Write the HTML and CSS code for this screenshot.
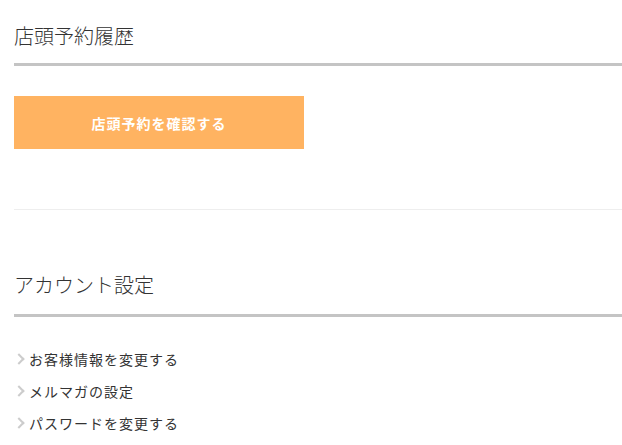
FILE: index.html
```html
<!DOCTYPE html>
<html lang="ja">
<head>
    <meta charset="UTF-8">
    <title>マイページ</title>
    <link rel="stylesheet" href="styles.css">
</head>
<body>
    <div class="page">
        <div class="section">
            <h2 class="title">店頭予約履歴</h2>
            <a class="btn" href="#">店頭予約を確認する</a>
        </div>
        <div class="section section2">
            <h2 class="title">アカウント設定</h2>
            <ul class="links">
                <li><a href="#"><span class="arrow"></span>お客様情報を変更する</a></li>
                <li><a href="#"><span class="arrow"></span>メルマガの設定</a></li>
                <li><a href="#"><span class="arrow"></span>パスワードを変更する</a></li>
            </ul>
        </div>
    </div>
</body>
</html>
```

FILE: styles.css
```css
*{
    margin: 0;
    padding: 0;
}
body{
    font-family: "Noto Sans CJK JP", "Noto Sans", sans-serif;
    color: #333;
    background: #fff;
}
a{
    text-decoration: none;
    color: inherit;
}
li{
    list-style: none;
}
.page{
    padding-left: 14px;
}
.section{
    padding-top: 21px;
    padding-bottom: 60px;
    border-bottom: 1px solid #eee;
}
.section2{
    padding-top: 60px;
    padding-bottom: 0;
    border-bottom: 0;
}
.title{
    font-size: 20px;
    font-weight: 300;
    line-height: 30px;
    padding-bottom: 12px;
    border-bottom: 3px solid #c4c4c4;
}
.section2 .title{
    padding-bottom: 14px;
}
.btn{
    display: flex;
    align-items: center;
    justify-content: center;
    width: 290px;
    height: 53px;
    margin-top: 30px;
    background: #ffb361;
    color: #fff;
    font-size: 14px;
    font-weight: bold;
    letter-spacing: 1px;
}
.links{
    padding-top: 26px;
}
.links li{
    line-height: 32px;
    font-size: 14px;
    letter-spacing: 1px;
}
.links a{
    display: flex;
    align-items: center;
}
.arrow{
    width: 6px;
    height: 6px;
    border-top: 2px solid #ccc;
    border-right: 2px solid #ccc;
    transform: rotate(45deg);
    margin-left: 1px;
    margin-right: 6px;
}
```
